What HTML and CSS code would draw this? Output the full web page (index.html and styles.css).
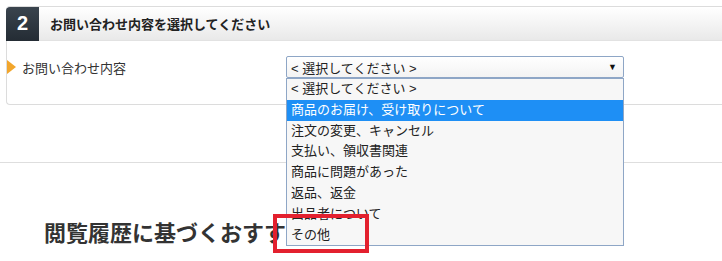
FILE: index.html
```html
<!DOCTYPE html>
<html lang="ja">
<head>
    <meta charset="UTF-8">
    <meta name="viewport" content="width=device-width, initial-scale=1.0">
    <title>お問い合わせ</title>
    <link rel="stylesheet" href="styles.css">
</head>
<body>

<div class="page">
    <section class="step">
        <div class="step-head">
            <span class="step-num">2</span>
            <h2 class="step-title">お問い合わせ内容を選択してください</h2>
        </div>
        <div class="step-body">
            <div class="field">
                <label class="field-label">お問い合わせ内容</label>
                <div class="select-wrap">
                    <div class="select">
                        <span>&lt; 選択してください &gt;</span>
                        <span class="arrow">▼</span>
                    </div>
                    <ul class="options">
                        <li>&lt; 選択してください &gt;</li>
                        <li class="active">商品のお届け、受け取りについて</li>
                        <li>注文の変更、キャンセル</li>
                        <li>支払い、領収書関連</li>
                        <li>商品に問題があった</li>
                        <li>返品、返金</li>
                        <li>出品者について</li>
                        <li>その他</li>
                    </ul>
                    <div class="mark"></div>
                </div>
            </div>
        </div>
    </section>

    <hr class="divider">

    <h2 class="recommend">閲覧履歴に基づくおすすめ商品</h2>
</div>

</body>
</html>
```

FILE: styles.css
```css
body {
    margin: 0;
    background-color: #ffffff;
    color: #333;
    font-family: "Liberation Sans", "Noto Sans CJK JP", sans-serif;
}

.page {
    padding: 6px 0 10px 0;
}

/* ステップ枠（右端は画面の外へ続く） */
.step {
    margin-left: 6px;
    border: 1px solid #dcdcdc;
    border-right: none;
    border-radius: 4px 0 0 4px;
    background-color: #ffffff;
}

.step-head {
    display: flex;
    align-items: center;
    height: 33px;
    background: linear-gradient(#ffffff, #e9e9e9);
    border-bottom: 1px solid #e2e2e2;
}

.step-num {
    width: 33px;
    height: 34px;
    margin: -1px 0 -1px -1px;
    display: flex;
    align-items: center;
    justify-content: center;
    background: linear-gradient(#3a444e, #242c34);
    border-radius: 4px 0 0 0;
    color: #ffffff;
    font-size: 20px;
    font-weight: bold;
    font-family: "Liberation Sans", sans-serif;
}

.step-title {
    margin: 0 0 0 11px;
    font-size: 13px;
    font-weight: bold;
    color: #222;
}

.step-body {
    padding: 15px 0 26px 0;
}

.field {
    display: flex;
    align-items: center;
}

.field-label {
    width: 279px;
    display: flex;
    align-items: center;
    font-size: 13px;
    color: #333;
}

/* オレンジの三角 */
.field-label::before {
    content: "";
    width: 0;
    height: 0;
    margin-right: 6px;
    border-top: 7px solid transparent;
    border-bottom: 7px solid transparent;
    border-left: 9px solid #f2a62c;
}

.select-wrap {
    position: relative;
    width: 338px;
}

.select {
    height: 20px;
    display: flex;
    align-items: center;
    justify-content: space-between;
    padding: 0 6px 0 4px;
    border: 1px solid #8ea6c6;
    border-radius: 2px;
    background: linear-gradient(#ffffff, #f3f3f3);
    font-size: 13px;
    color: #222;
}

.arrow {
    font-size: 9px;
    color: #111;
}

/* 開いたドロップダウン */
.options {
    position: absolute;
    top: 100%;
    left: 0;
    width: 336px;
    margin: 0;
    padding: 0;
    list-style: none;
    border: 1px solid #8ea6c6;
    background-color: #f7f7f7;
    z-index: 2;
}

.options li {
    height: 20.8px;
    line-height: 20.8px;
    padding-left: 4px;
    font-size: 13px;
    color: #222;
    white-space: nowrap;
}

.options li.active {
    background-color: #1e8ff5;
    color: #ffffff;
}

/* 赤枠 */
.mark {
    position: absolute;
    left: -13px;
    top: 158px;
    width: 88px;
    height: 31px;
    border: 4px solid #e3202e;
    z-index: 3;
}

.divider {
    margin: 57px 0 0 0;
    border: none;
    border-top: 1px solid #dedede;
}

.recommend {
    margin: 56px 0 0 44px;
    font-size: 22px;
    line-height: 30px;
    font-weight: bold;
    color: #333;
    white-space: nowrap;
}
```
